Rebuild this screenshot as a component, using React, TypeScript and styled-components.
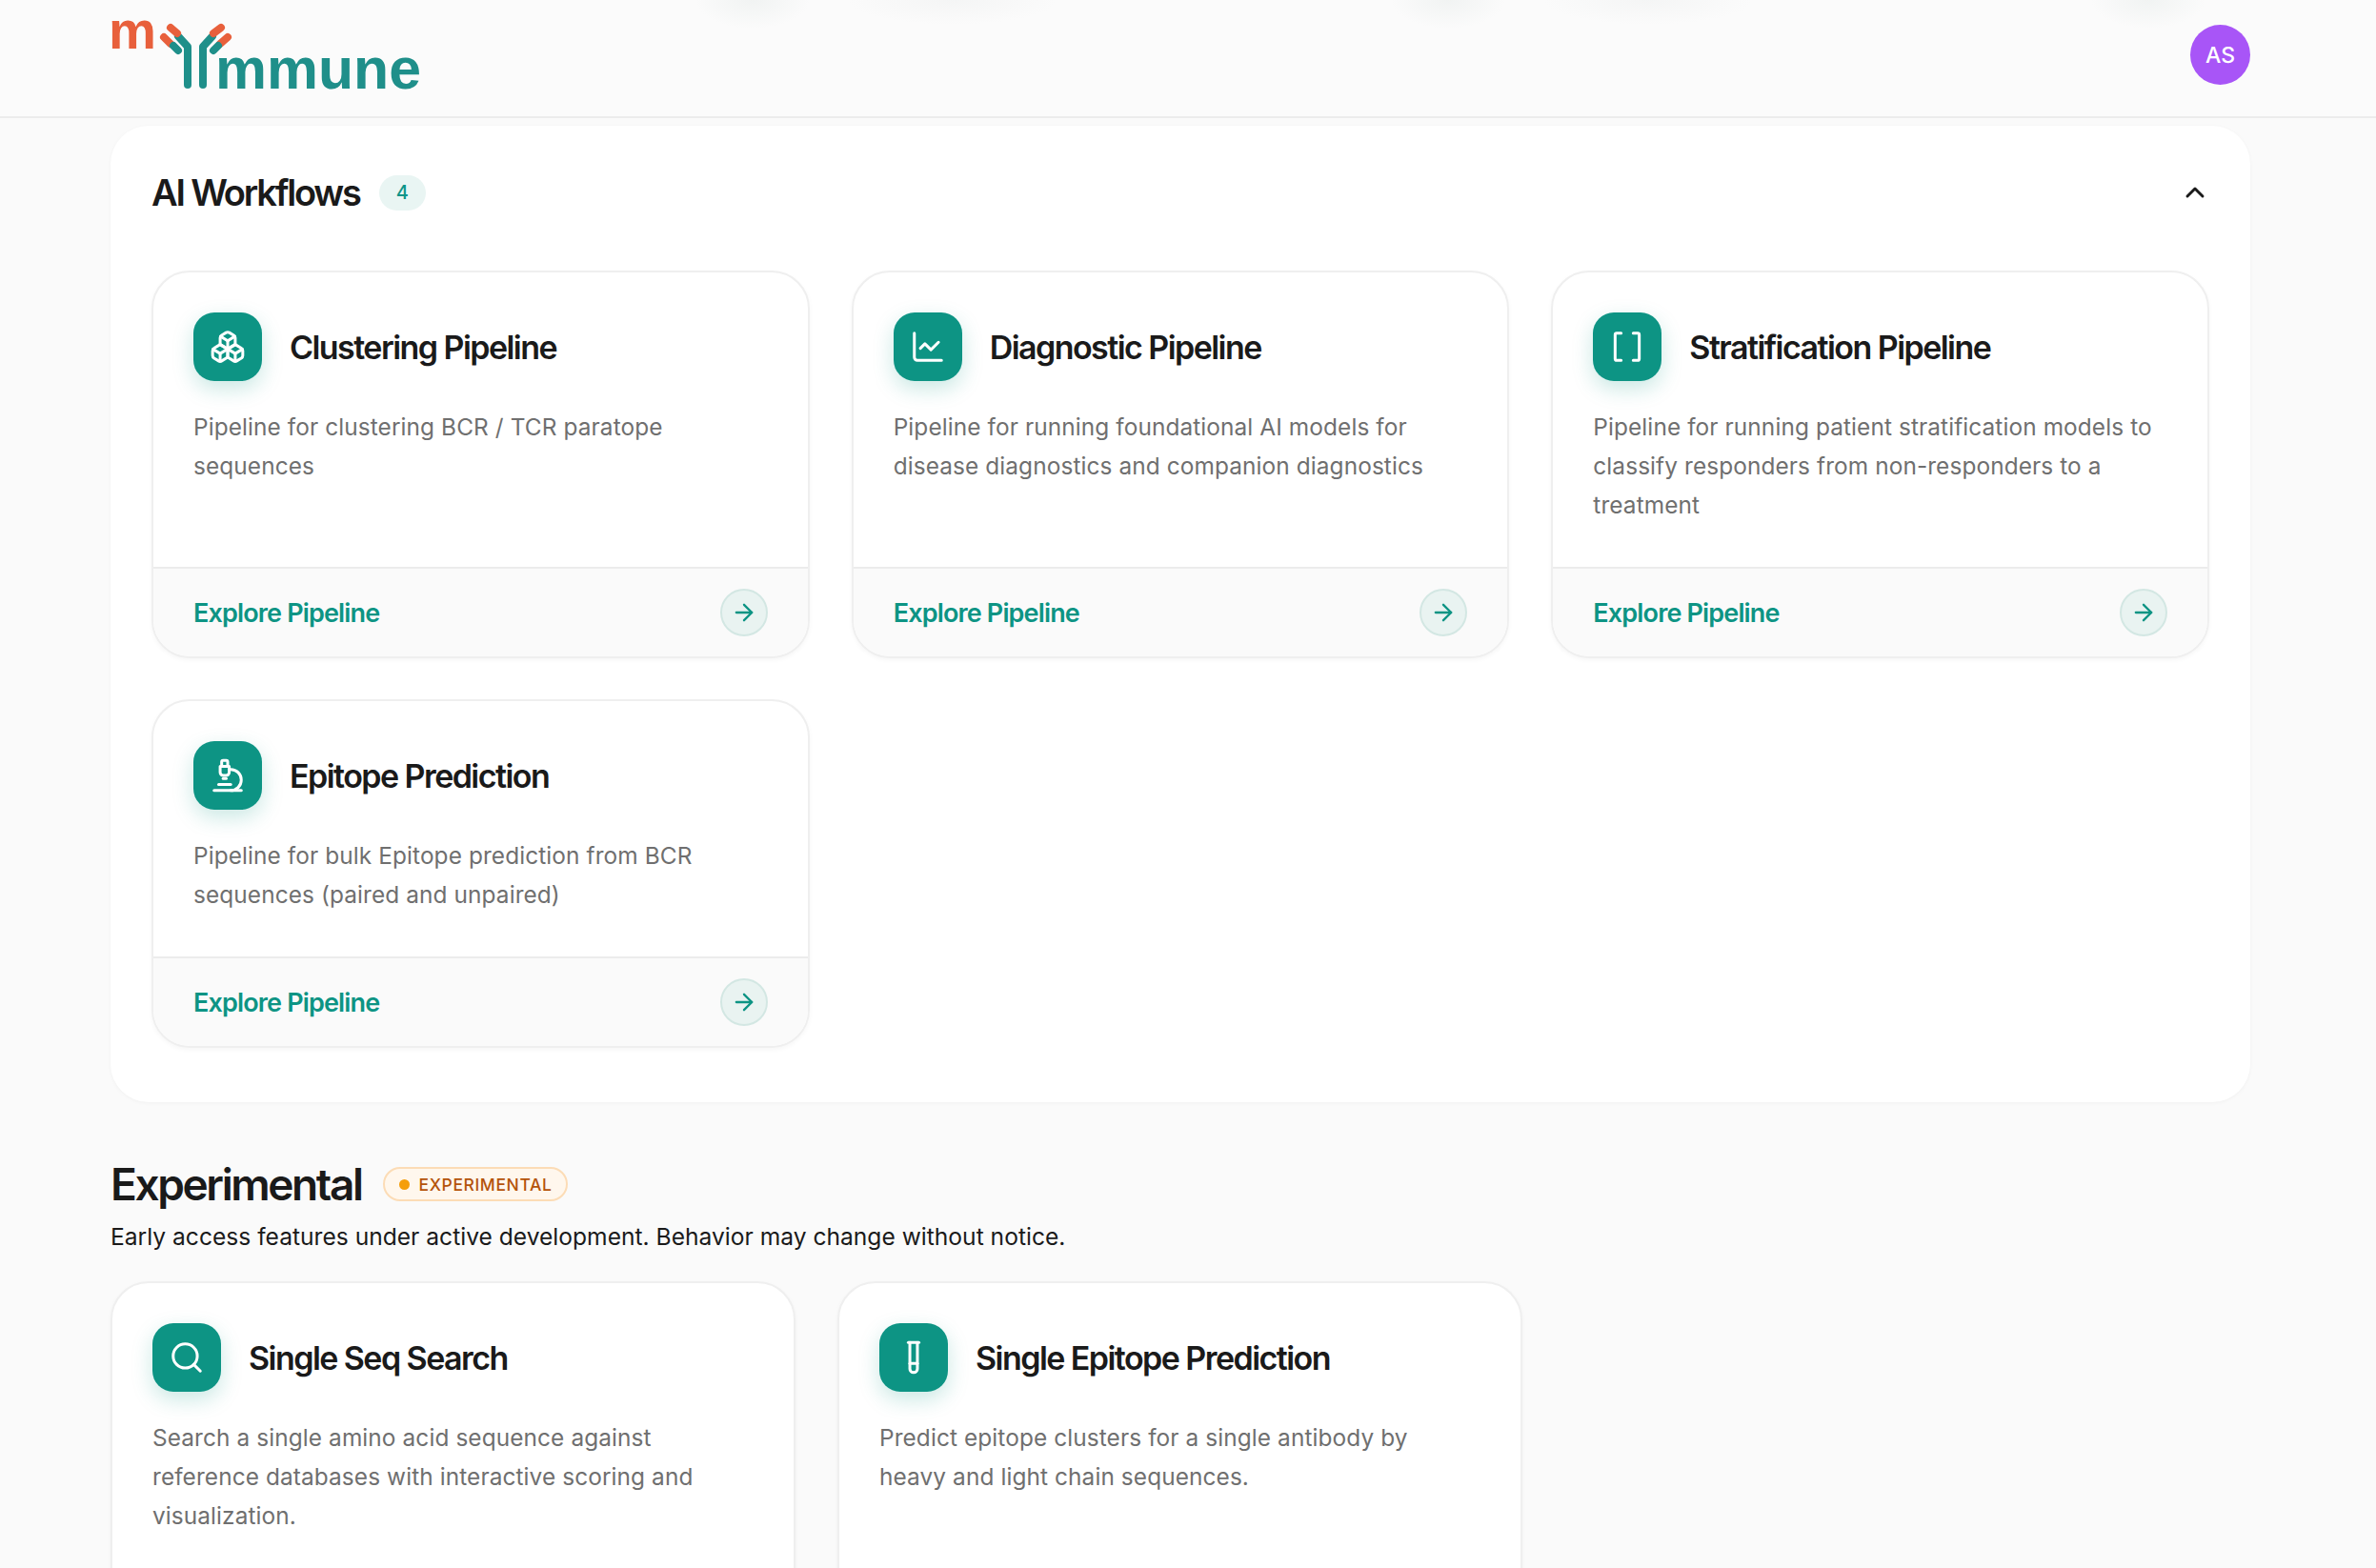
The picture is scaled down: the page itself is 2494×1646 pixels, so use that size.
import { ReactNode } from "react";
import styled, { createGlobalStyle } from "styled-components";
import { ArrowRight, Boxes, Brackets, ChartLine, ChevronUp, Microscope, Search, TestTube } from "lucide-react";

const GlobalStyle = createGlobalStyle`
  html, body {
    margin: 0;
    height: 100%;
    overflow: hidden;
    background: #fafafa;
    font-family: "Inter", "Liberation Sans", sans-serif;
  }
  * { box-sizing: border-box; }
`;

const Header = styled.header`
  display: flex;
  align-items: flex-start;
  justify-content: space-between;
  height: 124px;
  padding: 0 132px 0 116px;
  border-bottom: 2px solid #ececec;
  background:
    radial-gradient(ellipse 60px 30px at 790px 0, rgba(195, 208, 204, 0.18), transparent),
    radial-gradient(ellipse 110px 26px at 1000px 0, rgba(205, 210, 210, 0.14), transparent),
    radial-gradient(ellipse 60px 30px at 1520px 0, rgba(195, 208, 204, 0.18), transparent),
    radial-gradient(ellipse 110px 26px at 1730px 0, rgba(205, 210, 210, 0.14), transparent),
    radial-gradient(ellipse 60px 30px at 2255px 0, rgba(195, 208, 204, 0.18), transparent),
    #fbfbfb;
`;

const LogoSvg = styled.svg`
  display: block;
  width: 340px;
  height: 114px;
  margin-left: -10px;
`;

const Avatar = styled.div`
  display: flex;
  align-items: center;
  justify-content: center;
  width: 63px;
  height: 63px;
  margin-top: 26px;
  border-radius: 50%;
  background: #a855f7;
  color: #fff;
  font-size: 23px;
  font-weight: 500;
`;

const Main = styled.main`
  padding: 8px 132px 0 116px;
`;

const Panel = styled.section`
  padding: 0 43px 57px;
  border-radius: 40px;
  background: #fff;
  box-shadow: 0 1px 4px rgba(0, 0, 0, 0.04);
`;

const PanelHead = styled.div`
  display: flex;
  align-items: center;
  height: 152px;
  padding-bottom: 12px;
`;

const PanelTitle = styled.h2`
  margin: 0;
  color: #1a1a1a;
  font-size: 38px;
  font-weight: 600;
  letter-spacing: -2.2px;
`;

const CountBadge = styled.span`
  display: flex;
  align-items: center;
  justify-content: center;
  width: 49px;
  height: 37px;
  margin-left: 20px;
  border-radius: 19px;
  background: #e9f5f3;
  color: #0d9488;
  font-size: 20px;
  font-weight: 500;
`;

const Collapse = styled.span`
  display: flex;
  margin-left: auto;
  margin-right: -1px;
  color: #1a1a1a;
`;

const PipelineGrid = styled.div`
  display: grid;
  grid-template-columns: repeat(3, 1fr);
  gap: 43px 44px;
`;

const Card = styled.article`
  display: flex;
  flex-direction: column;
  overflow: hidden;
  border: 2px solid #efefef;
  border-radius: 40px;
  background: #fff;
  box-shadow: 0 2px 5px rgba(0, 0, 0, 0.04);
`;

const CardBody = styled.div`
  flex: 1;
  padding: 42px 42px 44px;
`;

const CardHead = styled.div`
  display: flex;
  align-items: center;
  gap: 29px;
  margin-bottom: 28px;
`;

const IconBox = styled.div`
  display: flex;
  flex: none;
  align-items: center;
  justify-content: center;
  width: 72px;
  height: 72px;
  border-radius: 22px;
  background: #0d9484;
  color: #fff;
  box-shadow: 0 8px 22px rgba(13, 148, 132, 0.22);
`;

const CardTitle = styled.h3`
  margin: 0;
  color: #1a1a1a;
  font-size: 34px;
  font-weight: 600;
  letter-spacing: -1.55px;
`;

const CardText = styled.p`
  margin: 0;
  color: #6f6f6f;
  font-size: 24.4px;
  line-height: 41px;
  letter-spacing: 0.1px;
`;

const CardFooter = styled.div`
  display: flex;
  align-items: center;
  justify-content: space-between;
  height: 94px;
  padding: 0 42px;
  border-top: 2px solid #ececec;
  background: #fafafa;
`;

const ExploreLabel = styled.span`
  color: #0d9484;
  font-size: 27px;
  font-weight: 600;
  letter-spacing: -0.85px;
`;

const ArrowCircle = styled.span`
  display: flex;
  align-items: center;
  justify-content: center;
  width: 50px;
  height: 50px;
  border: 2px solid #d3e7e3;
  border-radius: 50%;
  background: #e9f3f1;
  color: #0d9484;
`;

const SectionHead = styled.div`
  display: flex;
  align-items: center;
  gap: 22px;
  margin-top: 58px;
`;

const SectionTitle = styled.h2`
  margin: 0;
  color: #1a1a1a;
  font-size: 46px;
  font-weight: 600;
  letter-spacing: -2.4px;
`;

const StatusBadge = styled.span`
  display: flex;
  align-items: center;
  gap: 10px;
  height: 36px;
  padding: 0 15px;
  border: 2px solid #fcdcb6;
  border-radius: 18px;
  background: #fff7ed;
  color: #b45309;
  font-size: 17.5px;
  font-weight: 500;
  letter-spacing: 0.6px;
`;

const StatusDot = styled.i`
  width: 11px;
  height: 11px;
  border-radius: 50%;
  background: #f59e0b;
`;

const SectionText = styled.p`
  margin: 8px 0 28px;
  color: #1a1a1a;
  font-size: 24.6px;
  line-height: 38px;
`;

const ExperimentalGrid = styled.div`
  display: grid;
  grid-template-columns: repeat(3, 719px);
  grid-auto-rows: 406px;
  gap: 44px;
`;

const Logo = () => (
  <LogoSvg viewBox="106 0 340 114">
    <text x="114" y="51" fontFamily="Liberation Sans" fontWeight="700" fontSize="56" textLength="50" lengthAdjust="spacingAndGlyphs" fill="#e8603c">m</text>
    <text x="226" y="93" fontFamily="Liberation Sans" fontWeight="700" fontSize="62" textLength="216" lengthAdjust="spacingAndGlyphs" fill="#1f8f8a">mmune</text>
    <g fill="none" strokeWidth="8" strokeLinecap="round" strokeLinejoin="round">
      <path d="M197 89V49L187 38" stroke="#1f8f8a" />
      <path d="M213 89V49L223 38" stroke="#1f8f8a" />
      <path d="M186 35L179 29" stroke="#e8603c" />
      <path d="M224 35L232 29" stroke="#e8603c" />
      <path d="M179 46L172 39" stroke="#e8603c" />
      <path d="M231 46L239 39" stroke="#e8603c" />
      <path d="M182 48L187 53" stroke="#1f8f8a" />
      <path d="M229 48L224 53" stroke="#1f8f8a" />
    </g>
  </LogoSvg>
);

interface PipelineCardProps {
  icon: ReactNode;
  title: string;
  text: string;
  footer?: boolean;
}

const PipelineCard = ({ icon, title, text, footer = true }: PipelineCardProps) => (
  <Card>
    <CardBody>
      <CardHead>
        <IconBox>{icon}</IconBox>
        <CardTitle>{title}</CardTitle>
      </CardHead>
      <CardText>{text}</CardText>
    </CardBody>
    {footer && (
      <CardFooter>
        <ExploreLabel>Explore Pipeline</ExploreLabel>
        <ArrowCircle>
          <ArrowRight size={28} strokeWidth={2} />
        </ArrowCircle>
      </CardFooter>
    )}
  </Card>
);

export default function App() {
  return (
    <>
      <GlobalStyle />
      <Header>
        <Logo />
        <Avatar>AS</Avatar>
      </Header>
      <Main>
        <Panel>
          <PanelHead>
            <PanelTitle>AI Workflows</PanelTitle>
            <CountBadge>4</CountBadge>
            <Collapse>
              <ChevronUp size={32} strokeWidth={2.2} />
            </Collapse>
          </PanelHead>
          <PipelineGrid>
            <PipelineCard
              icon={<Boxes size={38} strokeWidth={1.9} />}
              title="Clustering Pipeline"
              text="Pipeline for clustering BCR / TCR paratope sequences"
            />
            <PipelineCard
              icon={<ChartLine size={38} strokeWidth={1.9} />}
              title="Diagnostic Pipeline"
              text="Pipeline for running foundational AI models for disease diagnostics and companion diagnostics"
            />
            <PipelineCard
              icon={<Brackets size={38} strokeWidth={1.9} />}
              title="Stratification Pipeline"
              text="Pipeline for running patient stratification models to classify responders from non-responders to a treatment"
            />
            <PipelineCard
              icon={<Microscope size={38} strokeWidth={1.9} />}
              title="Epitope Prediction"
              text="Pipeline for bulk Epitope prediction from BCR sequences (paired and unpaired)"
            />
          </PipelineGrid>
        </Panel>
        <SectionHead>
          <SectionTitle>Experimental</SectionTitle>
          <StatusBadge>
            <StatusDot />
            EXPERIMENTAL
          </StatusBadge>
        </SectionHead>
        <SectionText>Early access features under active development. Behavior may change without notice.</SectionText>
        <ExperimentalGrid>
          <PipelineCard
            icon={<Search size={38} strokeWidth={1.9} />}
            title="Single Seq Search"
            text="Search a single amino acid sequence against reference databases with interactive scoring and visualization."
            footer={false}
          />
          <PipelineCard
            icon={<TestTube size={38} strokeWidth={1.9} />}
            title="Single Epitope Prediction"
            text="Predict epitope clusters for a single antibody by heavy and light chain sequences."
            footer={false}
          />
        </ExperimentalGrid>
      </Main>
    </>
  );
}
